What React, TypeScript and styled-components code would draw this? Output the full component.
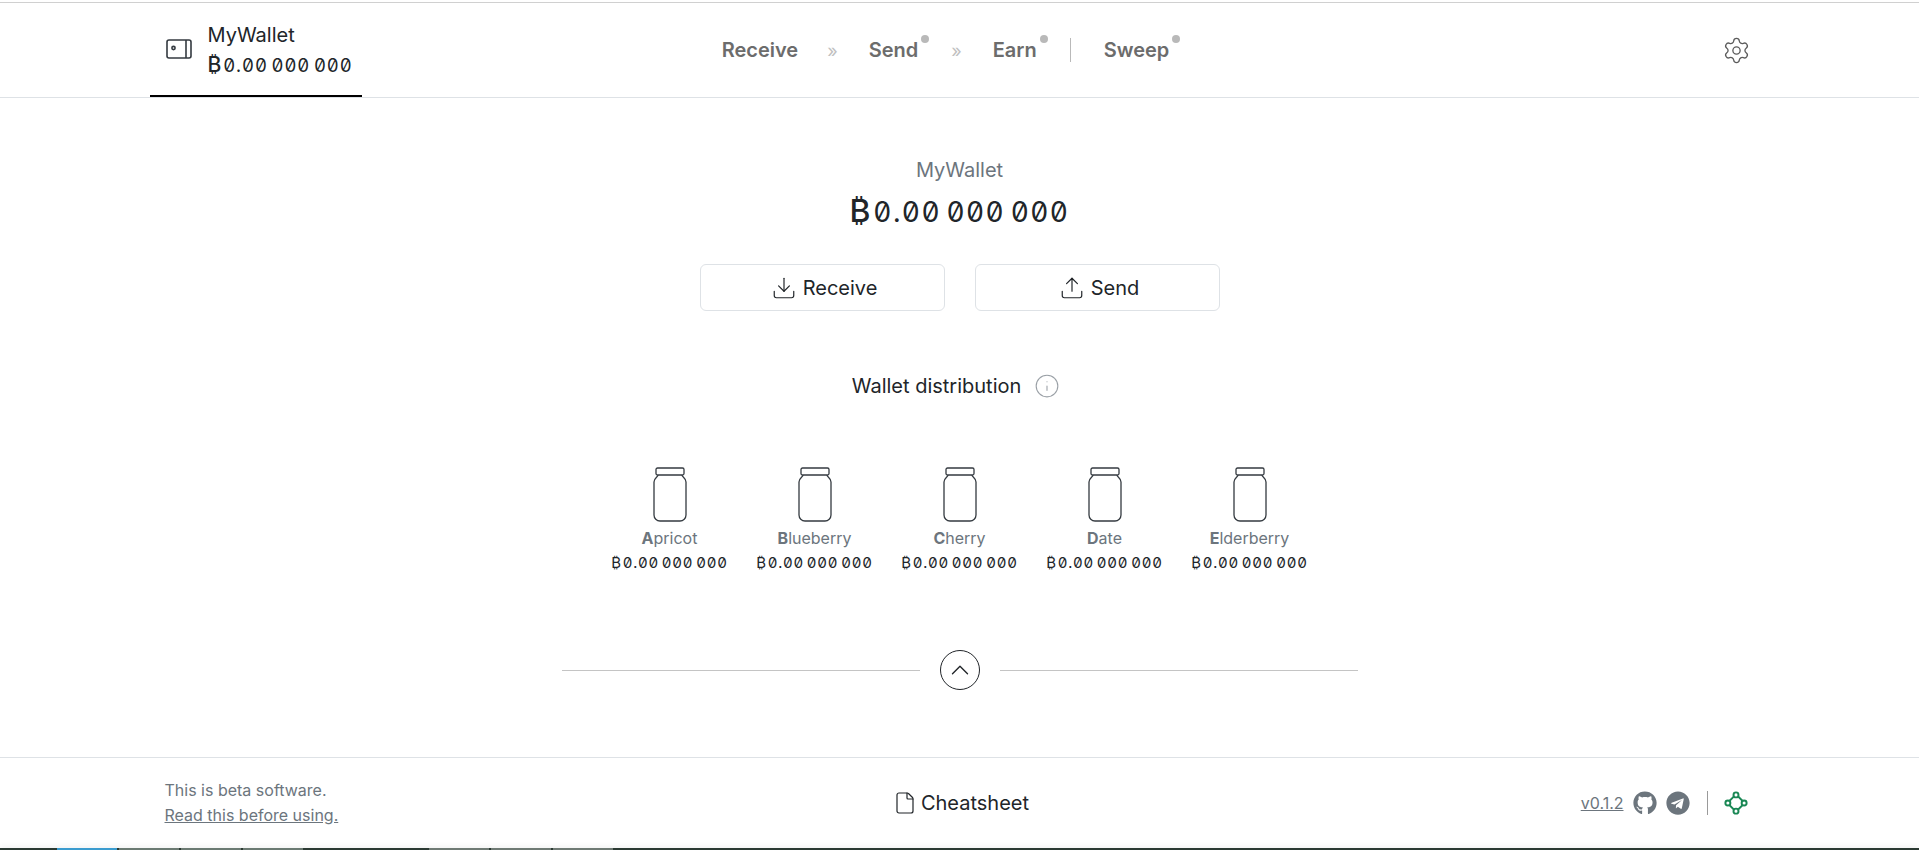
import * as React from 'react';
import styled, { createGlobalStyle } from 'styled-components';
import { Download, Upload, Settings, ChevronUp, File, Info } from 'lucide-react';
import { FaGithub, FaTelegram } from 'react-icons/fa';

const GlobalStyle = createGlobalStyle`
  html, body {
    margin: 0;
    padding: 0;
    background: #fff;
  }
  body {
    font-family: Inter, "Noto Sans", sans-serif;
    color: #212529;
  }
`;

const Page = styled.div`
  height: 850px;
  display: flex;
  flex-direction: column;
  overflow: hidden;
`;

const Header = styled.header`
  flex: none;
  height: 94px;
  margin-top: 2px;
  border-top: 1px solid #d0d0d0;
  border-bottom: 1px solid #dee2e6;
`;

const HeaderInner = styled.div`
  width: 1620px;
  height: 100%;
  margin: 0 auto;
  display: grid;
  grid-template-columns: 1fr auto 1fr;
  align-items: stretch;
`;

const WalletTab = styled.div`
  justify-self: start;
  align-self: start;
  width: 212px;
  height: 94px;
  box-sizing: border-box;
  padding-left: 16px;
  display: flex;
  gap: 16px;
  align-items: center;
  border-bottom: 2px solid #000;
`;

const WalletText = styled.div`
  display: flex;
  flex-direction: column;
  gap: 5px;
  padding-top: 2px;
`;

const WalletName = styled.div`
  font-size: 20px;
  line-height: 24px;
  color: #212529;
`;

const Amount = styled.div<{ $size: number }>`
  font-size: ${(p) => p.$size}px;
  line-height: 1.2;
  white-space: nowrap;
  color: #212529;
  display: flex;
  align-items: baseline;
`;

const Coin = styled.span<{ $strong?: boolean }>`
  font-size: ${(p) => (p.$strong ? '1.14em' : '1em')};
  font-weight: ${(p) => (p.$strong ? 500 : 400)};
`;

const Zeros = styled.span`
  font-feature-settings: "zero", "tnum";
  word-spacing: -0.12em;
  letter-spacing: 0.05em;
  margin-left: 0.1em;
`;

const Nav = styled.nav`
  display: flex;
  align-items: center;
  justify-content: center;
  height: 94px;
  padding-right: 28px;
  font-size: 20px;
  font-weight: 600;
  color: #6c6c6c;
`;

const NavItem = styled.span<{ $dot?: boolean }>`
  position: relative;
  &::after {
    content: '';
    display: ${(p) => (p.$dot ? 'block' : 'none')};
    position: absolute;
    right: -11px;
    top: -3px;
    width: 8px;
    height: 8px;
    border-radius: 50%;
    background: #b9b9b9;
  }
`;

const NavArrow = styled.span<{ $left: number; $right: number }>`
  margin: 0 ${(p) => p.$right}px 0 ${(p) => p.$left}px;
  font-weight: 400;
  font-size: 18px;
  color: #c0c0c0;
`;

const NavDivider = styled.span`
  width: 1px;
  height: 24px;
  margin: 0 33px;
  background: #b9b9b9;
`;

const GearSlot = styled.div`
  justify-self: end;
  display: flex;
  align-items: center;
  padding-right: 19px;
  color: #5c5c5c;
`;

const Main = styled.main`
  flex: 1;
  display: flex;
  flex-direction: column;
  align-items: center;
`;

const Title = styled.div`
  margin-top: 60px;
  font-size: 20px;
  line-height: 24px;
  color: #6c757d;
`;

const Balance = styled.div`
  margin-top: 10px;
`;

const Buttons = styled.div`
  display: flex;
  gap: 30px;
  margin-top: 34px;
`;

const ActionButton = styled.button`
  width: 245px;
  height: 47px;
  padding: 0 0 0 4px;
  display: flex;
  align-items: center;
  justify-content: center;
  gap: 6px;
  border: 1px solid #dee2e6;
  border-radius: 6px;
  background: #fff;
  font-family: inherit;
  font-size: 20px;
  color: #212529;
`;

const DistributionHead = styled.div`
  margin-top: 62px;
  padding-right: 7px;
  display: flex;
  align-items: center;
  gap: 13px;
  font-size: 20px;
  line-height: 24px;
`;

const Jars = styled.div`
  margin-top: 68px;
  display: flex;
  gap: 30px;
`;

const JarCol = styled.div`
  width: 115px;
  display: flex;
  flex-direction: column;
  align-items: center;
`;

const JarName = styled.div`
  margin-top: 6px;
  font-size: 16px;
  line-height: 20px;
  color: #6c757d;
  b {
    font-weight: 700;
  }
`;

const JarAmount = styled.div`
  margin-top: 6px;
`;

const Divider = styled.div`
  margin-top: 78px;
  display: flex;
  align-items: center;
  gap: 20px;
  width: 796px;
`;

const Rule = styled.div`
  flex: 1;
  height: 1px;
  background: #c4c4c4;
`;

const RoundButton = styled.div`
  width: 40px;
  height: 40px;
  box-sizing: border-box;
  border: 1px solid #212529;
  border-radius: 50%;
  display: flex;
  align-items: center;
  justify-content: center;
  color: #212529;
`;

const Footer = styled.footer`
  flex: none;
  height: 90px;
  border-top: 1px solid #dee2e6;
`;

const FooterInner = styled.div`
  width: 1590px;
  height: 100%;
  margin: 0 auto;
  display: grid;
  grid-template-columns: 1fr auto 1fr;
  align-items: center;
`;

const Beta = styled.div`
  font-size: 16px;
  line-height: 25px;
  color: #6c757d;
  a {
    color: inherit;
    text-decoration: underline;
  }
`;

const Cheatsheet = styled.div`
  display: flex;
  align-items: center;
  gap: 4px;
  padding-left: 3px;
  font-size: 20px;
  color: #212529;
`;

const FooterRight = styled.div`
  justify-self: end;
  display: flex;
  align-items: center;
  gap: 9px;
  padding-right: 6px;
  font-size: 16px;
  color: #6c757d;
  span {
    text-decoration: underline;
  }
`;

const FooterRule = styled.div`
  width: 1px;
  height: 24px;
  margin: 0 6px 0 8px;
  background: #9a9a9a;
`;

const TaskBar = styled.div`
  flex: none;
  height: 2px;
  display: flex;
  background: #2b3a33;
  box-shadow: 0 0 6px rgba(0, 0, 0, 0.15);
`;

const TaskItem = styled.div<{ $color: string; $gap: number }>`
  width: 60px;
  margin-left: ${(p) => p.$gap}px;
  background: ${(p) => p.$color};
`;

const WalletIcon = () => (
  <svg width="26" height="22" viewBox="0 0 26 22" fill="none" stroke="#343a40" strokeWidth="1.6">
    <rect x="1" y="2" width="24" height="18" rx="2" />
    <path d="M20 2v18" />
    <circle cx="7.5" cy="10" r="1.6" />
  </svg>
);

const JarIcon = () => (
  <svg width="34" height="55" viewBox="0 0 34 55" fill="none" stroke="#343a40" strokeWidth="1.3">
    <rect x="3" y="1" width="28" height="7" rx="1.5" />
    <path d="M5 8c0 2-4 3-4 7v33a6 6 0 0 0 6 6h20a6 6 0 0 0 6-6v-33c0-4-4-5-4-7" />
  </svg>
);

const TransactionIcon = () => (
  <svg width="26" height="26" viewBox="0 0 24 24" fill="none" stroke="#198754" strokeWidth="1.8">
    <path d="M12 4L4 12l8 8 8-8z" />
    <circle cx="12" cy="4.5" r="2.3" fill="#fff" />
    <circle cx="4.5" cy="12" r="2.3" fill="#fff" />
    <circle cx="19.5" cy="12" r="2.3" fill="#fff" />
    <circle cx="12" cy="19.5" r="2.3" fill="#fff" />
  </svg>
);

const Btc = ({ size, strong }: { size: number; strong?: boolean }) => (
  <Amount $size={size}>
    <Coin $strong={strong}>₿</Coin>
    <Zeros>0.00 000 000</Zeros>
  </Amount>
);

const jars = ['Apricot', 'Blueberry', 'Cherry', 'Date', 'Elderberry'];

const taskItems = [
  { color: '#3b9ccf', gap: 57 },
  { color: '#6b7a72', gap: 2 },
  { color: '#6b7a72', gap: 2 },
  { color: '#6b7a72', gap: 2 },
  { color: '#6f7a74', gap: 126 },
  { color: '#6f7a74', gap: 2 },
  { color: '#6f7a74', gap: 2 },
];

export default function App() {
  return (
    <Page>
      <GlobalStyle />
      <Header>
        <HeaderInner>
          <WalletTab>
            <WalletIcon />
            <WalletText>
              <WalletName>MyWallet</WalletName>
              <Btc size={18.5} strong />
            </WalletText>
          </WalletTab>
          <Nav>
            <NavItem>Receive</NavItem>
            <NavArrow $left={29} $right={31}>»</NavArrow>
            <NavItem $dot>Send</NavItem>
            <NavArrow $left={33} $right={31}>»</NavArrow>
            <NavItem $dot>Earn</NavItem>
            <NavDivider />
            <NavItem $dot>Sweep</NavItem>
          </Nav>
          <GearSlot>
            <Settings size={29} strokeWidth={1.1} />
          </GearSlot>
        </HeaderInner>
      </Header>
      <Main>
        <Title>MyWallet</Title>
        <Balance>
          <Btc size={28} strong />
        </Balance>
        <Buttons>
          <ActionButton>
            <Download size={26} strokeWidth={1.1} />
            Receive
          </ActionButton>
          <ActionButton>
            <Upload size={26} strokeWidth={1.1} />
            Send
          </ActionButton>
        </Buttons>
        <DistributionHead>
          Wallet distribution
          <Info size={26} strokeWidth={1} color="#9aa0a6" />
        </DistributionHead>
        <Jars>
          {jars.map((name) => (
            <JarCol key={name}>
              <JarIcon />
              <JarName>
                <b>{name[0]}</b>
                {name.slice(1)}
              </JarName>
              <JarAmount>
                <Btc size={15} />
              </JarAmount>
            </JarCol>
          ))}
        </Jars>
        <Divider>
          <Rule />
          <RoundButton>
            <ChevronUp size={30} strokeWidth={1.1} />
          </RoundButton>
          <Rule />
        </Divider>
      </Main>
      <Footer>
        <FooterInner>
          <Beta>
            This is beta software.
            <br />
            <a href="#read">Read this before using.</a>
          </Beta>
          <Cheatsheet>
            <File size={24} strokeWidth={1.2} />
            Cheatsheet
          </Cheatsheet>
          <FooterRight>
            <span>v0.1.2</span>
            <FaGithub size={24} />
            <FaTelegram size={24} />
            <FooterRule />
            <TransactionIcon />
          </FooterRight>
        </FooterInner>
      </Footer>
      <TaskBar>
        {taskItems.map((item, i) => (
          <TaskItem key={i} $color={item.color} $gap={item.gap} />
        ))}
      </TaskBar>
    </Page>
  );
}
